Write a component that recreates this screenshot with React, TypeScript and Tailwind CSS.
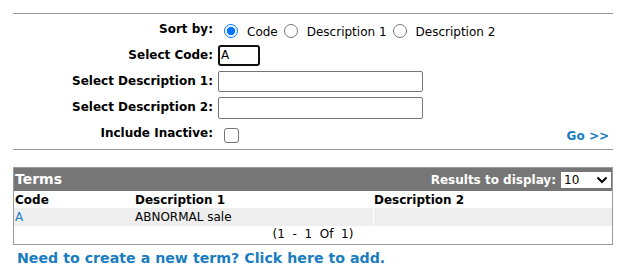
import { useState } from "react";

const font = "font-['DejaVu_Sans',Verdana,sans-serif]";

interface Term {
  code: string;
  desc1: string;
  desc2: string;
}

const TERMS: Term[] = [{ code: "A", desc1: "ABNORMAL sale", desc2: "" }];

function Label({ children }: { children: React.ReactNode }) {
  return <div className="text-right font-bold text-[12px] text-black">{children}</div>;
}

export default function App() {
  const [sortBy, setSortBy] = useState("code");

  return (
    <div className={`${font} w-[627px] h-[269px] bg-white text-[12px] text-black overflow-hidden`}>
      <div className="mx-[13px] w-[600px] pt-[13px]">
        <div className="h-px bg-[#999]" />

        {/* Search form */}
        <div className="mt-[2px] grid grid-cols-[200px_1fr] gap-x-[5px] items-center">
          <div className="h-[26px] flex items-center justify-end">
            <Label>Sort by:</Label>
          </div>
          <div className="h-[26px] flex items-center">
            {[
              ["code", "Code"],
              ["desc1", "Description 1"],
              ["desc2", "Description 2"],
            ].map(([value, text]) => (
              <label key={value} className="flex items-center">
                <input
                  type="radio"
                  name="sort"
                  checked={sortBy === value}
                  onChange={() => setSortBy(value)}
                  className="mt-[3px] ml-[6px] mr-[9px] w-[14px] h-[14px] accent-[#0075ff]"
                />
                <span className="mt-[5px]">{text}</span>
              </label>
            ))}
          </div>

          <div className="h-[26px] flex items-center justify-end">
            <Label>Select Code:</Label>
          </div>
          <div className="h-[26px] flex items-center">
            <input
              defaultValue="A"
              className="w-[42px] h-[21px] border-2 border-[#101010] rounded-[3px] px-[1px] text-[12px] outline-none"
            />
          </div>

          <div className="h-[26px] flex items-center justify-end">
            <Label>Select Description 1:</Label>
          </div>
          <div className="h-[26px] flex items-center">
            <input className="w-[205px] h-[21px] border border-[#767676] rounded-[2px] outline-none" />
          </div>

          <div className="h-[26px] flex items-center justify-end">
            <Label>Select Description 2:</Label>
          </div>
          <div className="h-[26px] flex items-center">
            <input className="mt-[2px] w-[205px] h-[22px] border border-[#767676] rounded-[2px] outline-none" />
          </div>

          <div className="h-[26px] flex items-center justify-end">
            <Label>Include Inactive:</Label>
          </div>
          <div className="h-[26px] flex items-center justify-between">
            <div className="ml-[6px] mt-[4px] w-[15px] h-[15px] border border-[#767676] rounded-[3px] bg-white" />
            <a className="mt-[6px] mr-[4px] font-bold text-[#1a7dc0] cursor-pointer">Go &gt;&gt;</a>
          </div>
        </div>

        <div className="mt-[3px] h-px bg-[#999]" />

        {/* Results table */}
        <div className="mt-[17px] border border-[#9a9a9a]">
          <div className="h-[23px] bg-[#767676] flex items-center justify-between pl-px pr-px">
            <span className="text-white font-bold text-[14px]">Terms</span>
            <div className="flex items-center gap-[5px]">
              <span className="text-white font-bold text-[12px]">Results to display:</span>
              <div className="w-[50px] h-[16px] bg-white flex items-center justify-between px-[3px]">
                <span className="text-[12px]">10</span>
                <svg width="12" height="8" viewBox="0 0 12 8">
                  <path d="M1.5 1.5 L6 6 L10.5 1.5" fill="none" stroke="#000" strokeWidth="2" />
                </svg>
              </div>
            </div>
          </div>

          <div className="grid grid-cols-[120px_239px_1fr] font-bold h-[17px] items-center">
            <div className="pl-px">Code</div>
            <div className="pl-px">Description 1</div>
            <div className="pl-px">Description 2</div>
          </div>

          {TERMS.map((term) => (
            <div key={term.code} className="grid grid-cols-[359px_1fr] gap-x-px h-[15px]">
              <div className="bg-[#eeeeee] grid grid-cols-[120px_1fr] items-center">
                <a className="pl-px text-[#1a7dc0] cursor-pointer">{term.code}</a>
                <span className="pl-px">{term.desc1}</span>
              </div>
              <div className="bg-[#eeeeee] pl-px">{term.desc2}</div>
            </div>
          ))}

          <div className="h-[21px] flex items-center justify-center whitespace-pre">
            (1  -  1  Of  1)
          </div>
        </div>

        <a className="block mt-[3px] ml-[4px] font-bold text-[14.2px] text-[#1a7dc0] cursor-pointer">
          Need to create a new term? Click here to add.
        </a>
      </div>
    </div>
  );
}
